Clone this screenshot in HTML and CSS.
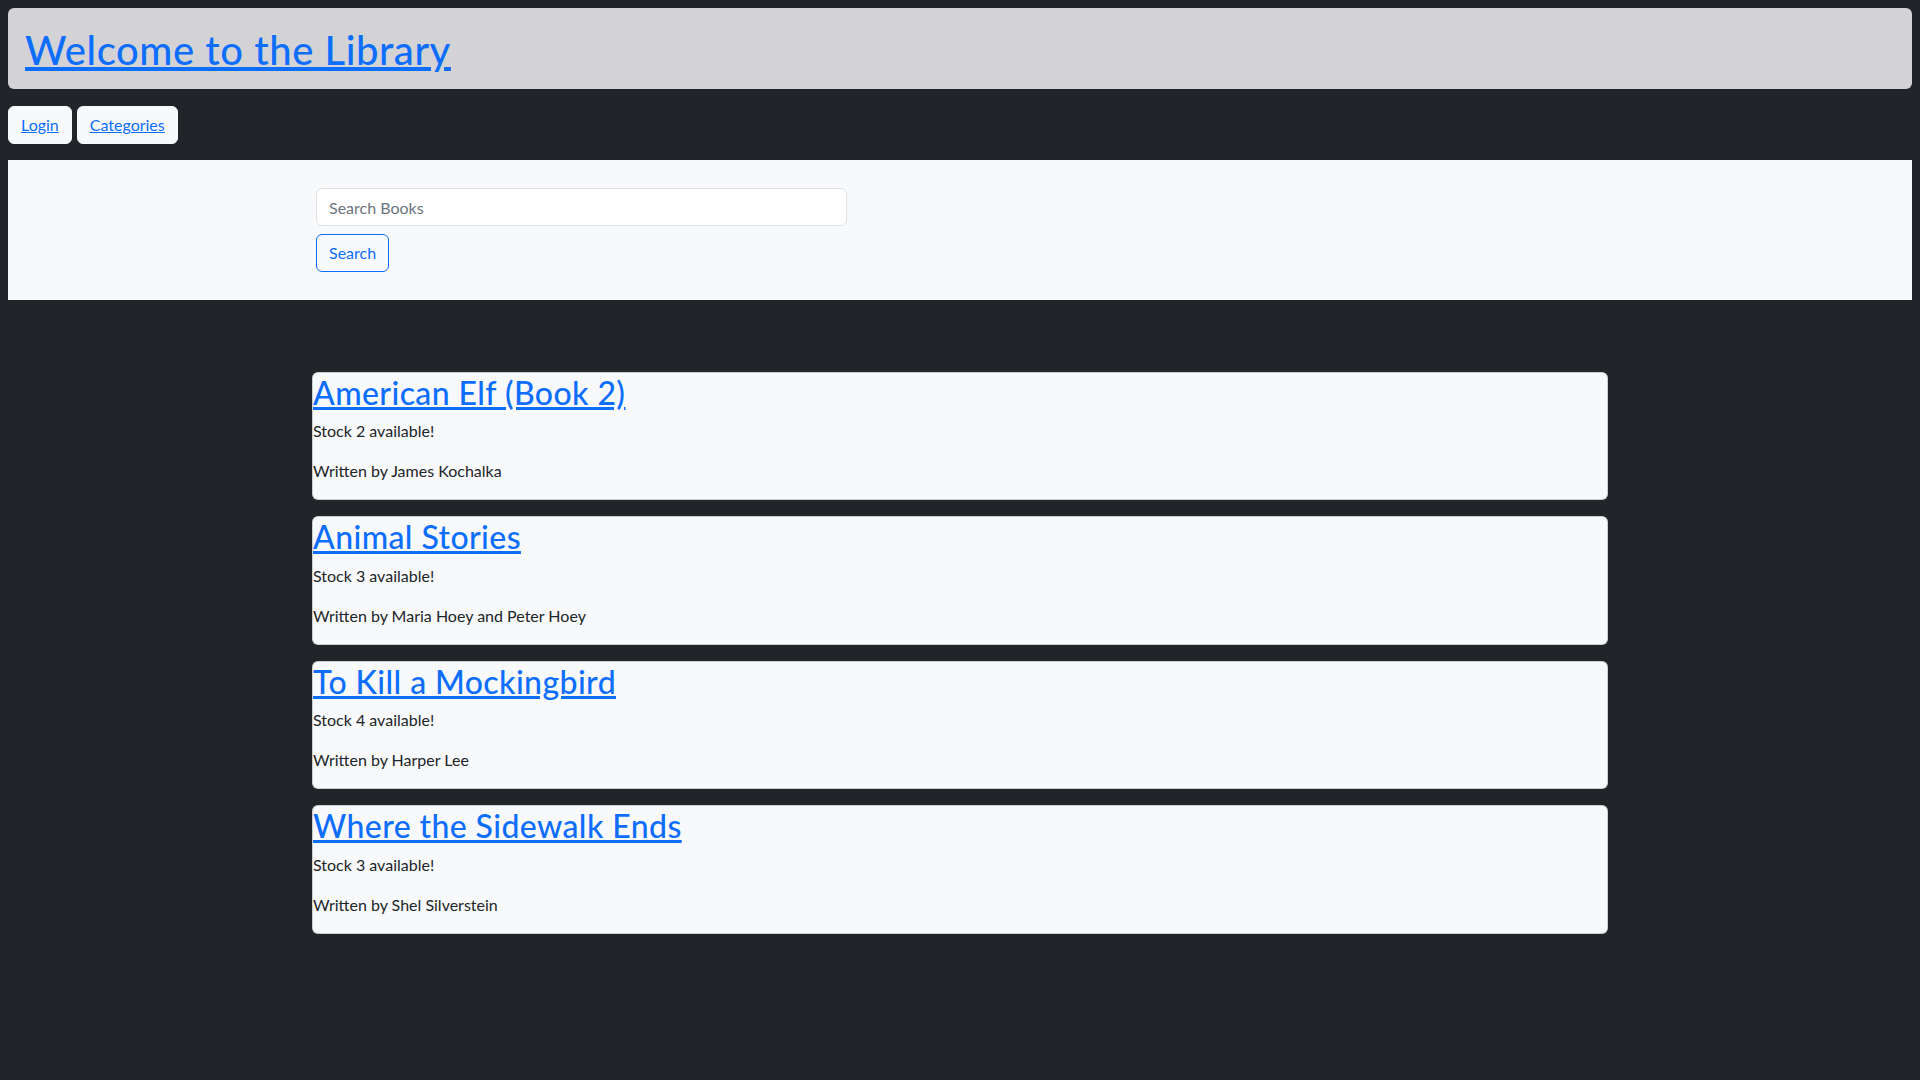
FILE: index.html
```html
<!DOCTYPE html>
<html lang="en">
<head>
<meta charset="utf-8">
<title>Library</title>
<link rel="stylesheet" href="styles.css">
</head>
<body>
<header class="site-header">
  <h1 class="site-title"><a href="#">Welcome to the Library</a></h1>
</header>
<nav class="nav-row">
  <a class="nav-btn" href="#">Login</a>
  <a class="nav-btn" href="#">Categories</a>
</nav>
<section class="search-band">
  <div class="container">
    <form class="search-form">
      <input class="search-input" type="text" placeholder="Search Books">
      <button class="search-btn" type="button">Search</button>
    </form>
  </div>
</section>
<main class="container book-list">
  <div class="book-card">
    <h2 class="book-title"><a href="#">American Elf (Book 2)</a></h2>
    <p>Stock 2 available!</p>
    <p>Written by James Kochalka</p>
  </div>
  <div class="book-card">
    <h2 class="book-title"><a href="#">Animal Stories</a></h2>
    <p>Stock 3 available!</p>
    <p>Written by Maria Hoey and Peter Hoey</p>
  </div>
  <div class="book-card">
    <h2 class="book-title"><a href="#">To Kill a Mockingbird</a></h2>
    <p>Stock 4 available!</p>
    <p>Written by Harper Lee</p>
  </div>
  <div class="book-card">
    <h2 class="book-title"><a href="#">Where the Sidewalk Ends</a></h2>
    <p>Stock 3 available!</p>
    <p>Written by Shel Silverstein</p>
  </div>
</main>
</body>
</html>
```
FILE: styles.css
```css
* { box-sizing: border-box; }
html, body { height: 100%; }
body {
  margin: 8px;
  background: #212529;
  color: #212529;
  font-family: Lato, "Noto Sans", sans-serif;
  font-size: 16px;
  line-height: 24px;
}
a { color: #0d6efd; text-decoration: underline; }

.site-header {
  background: #d3d3d6;
  border-radius: 6px;
  padding: 18px 17px 15px;
}
.site-title {
  margin: 0;
  font-size: 40px;
  font-weight: 500;
  line-height: 48px;
  letter-spacing: 0.55px;
}

.nav-row {
  display: flex;
  gap: 5px;
  margin: 17px 0 16px;
}
.nav-btn {
  display: block;
  background: #f8f9fa;
  border: 1px solid #f8f9fa;
  border-radius: 6px;
  padding: 6px 12px;
  font-size: 16px;
  line-height: 24px;
}

.search-band {
  background: #f8f9fa;
  padding: 28px 0;
}
.container {
  width: 1320px;
  margin: 0 auto;
  padding: 0 12px;
}
.search-form {
  display: flex;
  flex-direction: column;
  align-items: flex-start;
  gap: 8px;
  padding-left: 4px;
}
.search-input {
  width: 531px;
  height: 38px;
  border: 1px solid #dee2e6;
  border-radius: 6px;
  background: #fff;
  padding: 6px 12px;
  font: inherit;
  color: #212529;
}
.search-input::placeholder { color: #6c757d; }
.search-btn {
  height: 38px;
  border: 1px solid #0d6efd;
  border-radius: 6px;
  background: transparent;
  color: #0d6efd;
  padding: 6px 12px;
  font: inherit;
}

.book-list { margin-top: 72px; }
.book-card {
  background: #f8f9fa;
  border: 1px solid rgba(0,0,0,.175);
  border-radius: 6px;
  margin-bottom: 16px;
}
.book-title {
  margin: 0 0 7px;
  padding-top: 1px;
  font-size: 32px;
  font-weight: 500;
  line-height: 38.4px;
  letter-spacing: 0.4px;
}
.book-card p { margin: 0 0 16px; }
```
